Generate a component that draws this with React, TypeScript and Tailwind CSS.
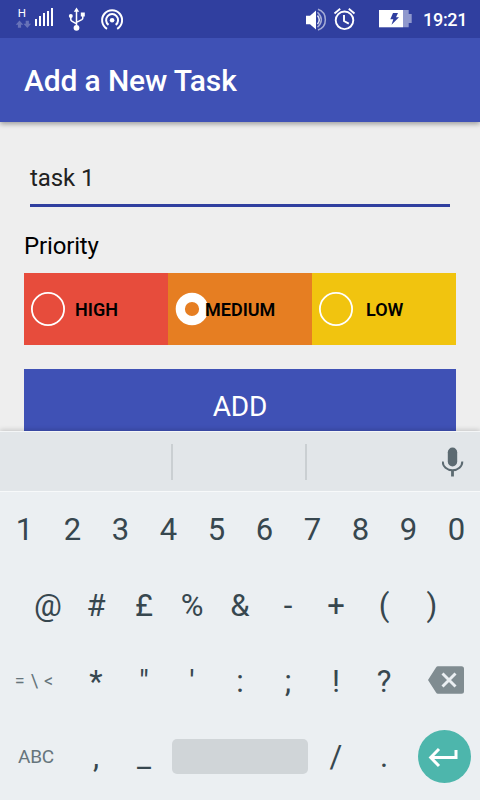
import type { ReactNode } from "react";

function StatusBar() {
  return (
    <div className="relative z-10 h-[38px] shrink-0 bg-[#303f9f]">
      <svg width="480" height="38" viewBox="0 0 480 38" fill="none" className="block">
        <text x="17.700" y="17" fontSize="11.500" fill="#fff" fontFamily="Roboto, sans-serif">H</text>
        <g fill="#6772b8">
          <path d="M19.500 20.500l3.800 4.200h-2.200v3h-3.200v-3h-2.200z" />
          <path d="M27.300 28l3.800-4.200h-2.200v-3h-3.200v3h-2.200z" />
        </g>
        <g fill="#fff">
          <path d="M35 19h2v7h-2zM39 16h2v10h-2zM43 13h2v13h-2zM47 11h2v15h-2zM51 8h2v18h-2z" />
        </g>
        <g stroke="#fff" strokeWidth="1.500">
          <path d="M76.500 10v17M70.800 16v3.500q0 1 1 1.600l4.700 2.700M82.800 15v3q0 1-1 1.600l-5.300 2.700" />
        </g>
        <g fill="#fff">
          <path d="M76.500 7.500l2.700 4.300h-5.400z" />
          <circle cx="76.500" cy="27.800" r="2.900" />
          <circle cx="70.800" cy="16" r="2" />
          <path d="M80.800 12.500h4v4h-4z" />
        </g>
        <g stroke="#fff" strokeWidth="2">
          <path d="M107 28.800a10 10 0 1 1 10.200 0" />
          <path d="M108.500 24.900a6 6 0 1 1 7.200 0" />
        </g>
        <circle cx="112.100" cy="20.200" r="2.300" fill="#fff" />
        <path d="M306 15.800h4l6-5.300v19l-6-5.300h-4z" fill="#fff" />
        <g strokeWidth="1.500">
          <path d="M317.500 15.500q3.500 4.300 0 8.600" stroke="#e0e3f2" />
          <path d="M317.500 12.300q7.700 7.500 0 15" stroke="#a5acd6" />
          <path d="M318 9.300c9.800 3.500 9.800 17.200 0 20.700" stroke="#a5acd6" />
        </g>
        <g stroke="#fff" strokeWidth="1.900">
          <circle cx="344.500" cy="20.300" r="8.800" />
          <path d="M344 15v6l4.800 2.700M334.500 13.500l5.700-4.700M354.500 13.500l-5.700-4.700" />
        </g>
        <path d="M379 10h24v17.300h-24z" fill="#fff" />
        <path d="M403 10h5.700v4h3v9h-3v4.300H403z" fill="#8f98cd" />
        <path d="M393 13h5l-2 4.200h3l-7.500 7.500 1.800-5.500h-3z" fill="#303f9f" />
        <text x="423" y="26" fontSize="18" fontWeight="500" fill="#fff" fontFamily="Roboto, sans-serif" textLength="44.500">19:21</text>
      </svg>
    </div>
  );
}

function Priority({ label, color, pad, checked }: { label: string; color: string; pad: string; checked?: boolean }) {
  return (
    <div className={`flex flex-1 items-center ${color}`}>
      <svg width="36" height="36" viewBox="0 0 36 36" fill="none" stroke="#fff" className="ml-1.5 shrink-0">
        {checked ? (
          <circle cx="18" cy="18" r="11.700" strokeWidth="9.200" />
        ) : (
          <circle cx="18" cy="18" r="16.100" strokeWidth="1.800" />
        )}
      </svg>
      <span className={`pt-0.5 text-[18px] leading-6 font-semibold text-black ${pad}`}>{label}</span>
    </div>
  );
}

function Key({ children }: { children: ReactNode }) {
  return <div className="flex h-[76px] w-12 shrink-0 items-center justify-center">{children}</div>;
}

function Keys({ chars }: { chars: string }) {
  return (
    <>
      {chars.split("").map((c) => (
        <Key key={c}>{c}</Key>
      ))}
    </>
  );
}

function Keyboard() {
  return (
    <div className="relative h-[369px] shrink-0 bg-[#ebeff2] shadow-[0_-1px_5px_rgba(0,0,0,0.18)]">
      <div className="flex h-[60px] items-center border-t border-[#f4f6f7] bg-[#e2e6e9]">
        <div className="ml-[171px] h-9 w-0.5 bg-[#cacfd2]" />
        <div className="ml-[132px] h-9 w-0.5 bg-[#cacfd2]" />
        <svg width="22" height="30" viewBox="0 0 22 30" fill="none" className="ml-[134.500px]">
          <rect x="5.800" y="0.500" width="9.400" height="19" rx="4.700" fill="#5c6a71" />
          <path d="M.7 14.500c0 5 4.200 8.700 9.800 8.700s9.800-3.700 9.800-8.700" stroke="#5c6a71" strokeWidth="2" />
          <path d="M10.500 23v6.500" stroke="#5c6a71" strokeWidth="2.800" />
        </svg>
      </div>
      <div className="h-px bg-[#f7f9fa]" />
      <div className="-mt-px text-[31px] leading-none text-[#37474f]">
        <div className="flex pl-[0.500px]">
          <Keys chars="1234567890" />
        </div>
        <div className="flex px-6">
          <Keys chars="@#£%&-+()" />
        </div>
        <div className="flex">
          <div className="flex w-[72px] items-center justify-center gap-1.5 pr-1 text-[18px] text-[#66757c]">
            <span>=</span>
            <span>\</span>
            <span>&lt;</span>
          </div>
          <Keys chars={"*\"':;!?"} />
          <div className="flex w-[72px] items-center pb-0.5 pl-5">
            <svg width="36" height="28" viewBox="0 0 36 28" fill="none">
              <path d="M10 .3h23.500a2.500 2.500 0 0 1 2.500 2.500v22.400a2.500 2.500 0 0 1-2.500 2.500H10q-1.300 0-2-1.200L0 14 8 1.500Q8.700.3 10 .3z" fill="#808c91" />
              <path d="M14.500 7.500l13 13M27.500 7.500l-13 13" stroke="#ebeff2" strokeWidth="2.900" />
            </svg>
          </div>
        </div>
        <div className="-mt-px flex">
          <div className="flex w-[72px] items-center justify-center text-[19px] tracking-[-0.200px] text-[#66757c]">ABC</div>
          <Keys chars=",_" />
          <div className="flex w-36 items-center px-1">
            <div className="h-[35px] w-full rounded-[5px] bg-[#d0d5d8]" />
          </div>
          <Keys chars="/." />
          <div className="flex w-[72px] items-center pl-[10px]">
            <svg width="53" height="53" viewBox="0 0 53 53" fill="none">
              <circle cx="26.500" cy="26.500" r="26.500" fill="#4db6ac" />
              <path d="M38 20v7.500H13M21 19l-8.300 8.500 8.300 8.500" stroke="#fff" strokeWidth="3" />
            </svg>
          </div>
        </div>
      </div>
    </div>
  );
}

export default function App() {
  return (
    <div className="flex h-[800px] w-[480px] flex-col overflow-hidden bg-[#eeeeee] font-[Roboto,sans-serif]">
      <StatusBar />
      <header className="flex h-[84px] shrink-0 items-center bg-[#3f51b5] px-6 pt-0.5 shadow-[0_2px_5px_rgba(0,0,0,0.35)]">
        <h1 className="text-[30px] leading-9 font-medium tracking-[-0.150px] text-white">Add a New Task</h1>
      </header>
      <main className="h-[309px] shrink-0 overflow-hidden px-6 pt-10">
        <div className="mx-1.5 h-[45px] border-b-3 border-[#303f9f] text-[24px] leading-8 tracking-[-0.100px] text-[#212121]">task 1</div>
        <div className="mt-[23px] h-[43px] text-[24px] leading-8 tracking-[-0.150px] text-black">Priority</div>
        <div className="flex h-[72px]">
          <Priority label="HIGH" color="bg-[#e74c3c]" pad="ml-[9px]" />
          <Priority label="MEDIUM" color="bg-[#e67e22]" pad="-ml-[5px]" checked />
          <Priority label="LOW" color="bg-[#f1c40f]" pad="ml-3" />
        </div>
        <button className="mt-6 flex h-[72px] w-full items-center justify-center bg-[#3f51b5] pt-[3px] text-[28px] tracking-[-0.200px] text-white">ADD</button>
      </main>
      <Keyboard />
    </div>
  );
}
